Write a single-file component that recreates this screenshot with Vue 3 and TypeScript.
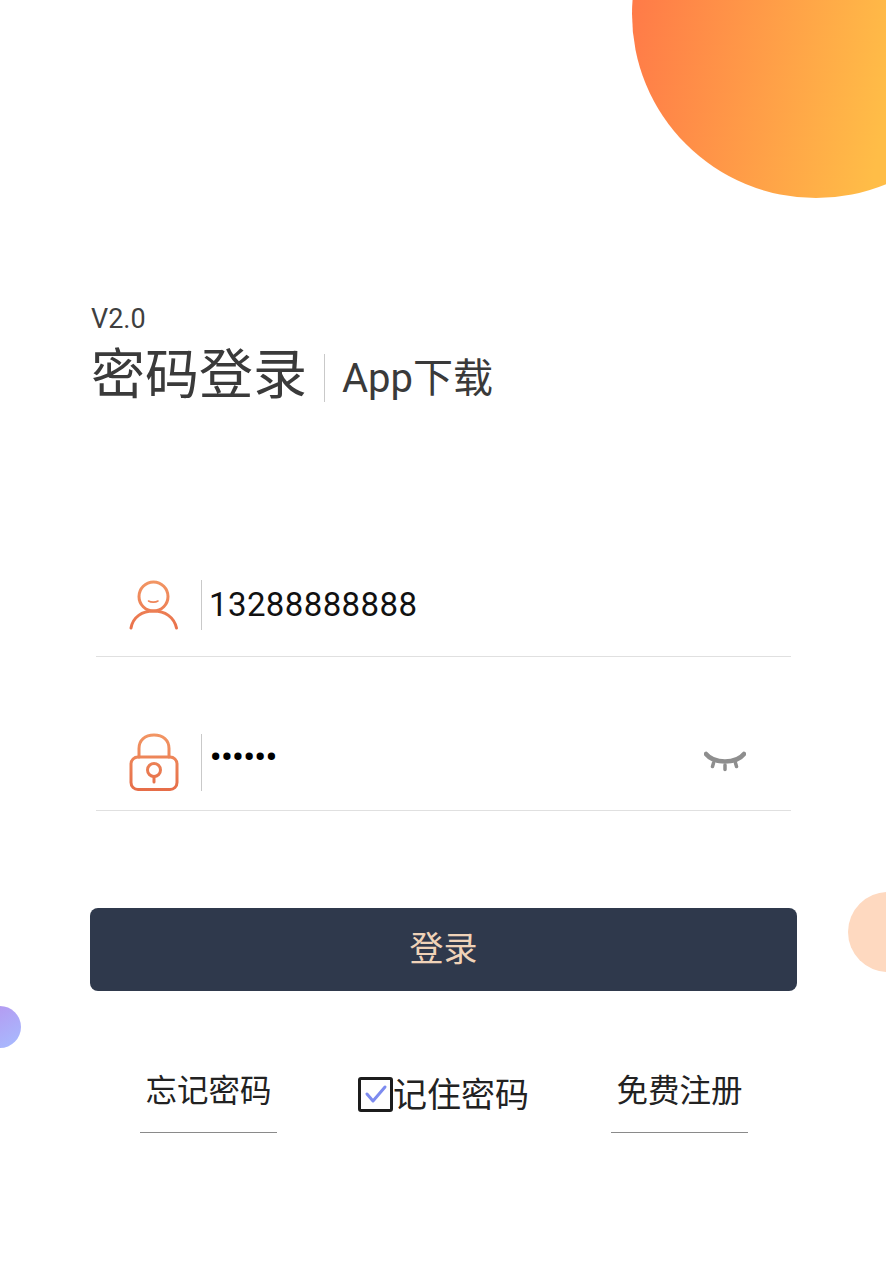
<script setup lang="ts">
const phone = '13288888888'
const dots = '••••••'
</script>

<template>
  <div class="page">
    <div class="blob blob-big"></div>
    <div class="blob blob-peach"></div>
    <div class="blob blob-purple"></div>

    <header class="head">
      <div class="version">V2.0</div>
      <div class="titles">
        <h1 class="title">密码登录</h1>
        <span class="title-sep"></span>
        <span class="download"><span class="app">App</span>下载</span>
      </div>
    </header>

    <section class="form">
      <div class="field field-user">
        <span class="icon">
          <svg width="50" height="50" viewBox="0 0 50 50" fill="none" stroke="url(#g1)" stroke-width="3" stroke-linecap="round">
            <defs>
              <linearGradient id="g1" gradientUnits="userSpaceOnUse" x1="0" y1="0" x2="0" y2="50">
                <stop offset="0" stop-color="#f29664" />
                <stop offset="1" stop-color="#e9704a" />
              </linearGradient>
            </defs>
            <circle cx="24.500" cy="16.500" r="14.500" />
            <path d="M2 48C4 37 13 31 24.500 31S45 37 47.500 48" />
            <path d="M19.500 21c2.500 1.500 7 1.500 9.500 0" stroke-width="1.600" />
          </svg>
        </span>
        <span class="sep"></span>
        <span class="value">{{ phone }}</span>
      </div>

      <div class="field field-pass">
        <span class="icon">
          <svg width="50" height="58" viewBox="0 0 50 58" fill="none" stroke="url(#g2)" stroke-width="3" stroke-linecap="round">
            <defs>
              <linearGradient id="g2" gradientUnits="userSpaceOnUse" x1="0" y1="0" x2="0" y2="58">
                <stop offset="0" stop-color="#f29664" />
                <stop offset="1" stop-color="#e66d48" />
              </linearGradient>
            </defs>
            <path d="M10 24V15.500C10 7 16 2 25 2S40 7 40 15.500V24" />
            <rect x="2" y="24" width="46" height="32.500" rx="7" />
            <circle cx="25" cy="37" r="6.500" />
            <path d="M25 43.500V49" />
          </svg>
        </span>
        <span class="sep"></span>
        <span class="value dots">{{ dots }}</span>
        <svg class="eye" width="42" height="22" viewBox="0 0 42 22" fill="none" stroke="#8e8e8e" stroke-width="4.500" stroke-linecap="round">
          <path d="M2 3C10 13 32 13 40 3" />
          <path d="M9.500 12l-1 3.500M21 14v4.500M31.500 12l1 3.500" stroke-width="3.500" />
        </svg>
      </div>
    </section>

    <button class="login" type="button">登录</button>

    <footer class="links">
      <a class="link">忘记密码</a>
      <label class="remember">
        <span class="box">
          <svg width="26" height="22" viewBox="0 0 26 22" fill="none" stroke="#7d8bef" stroke-width="3" stroke-linecap="round" stroke-linejoin="round">
            <path d="M4 11l6 7L22 4" />
          </svg>
        </span>
        <span>记住密码</span>
      </label>
      <a class="link">免费注册</a>
    </footer>
  </div>
</template>

<style>
html, body { margin: 0; background: #fff; }
</style>

<style scoped>
.page {
  position: relative;
  width: 886px;
  height: 1280px;
  overflow: hidden;
  background: #fff;
  box-sizing: border-box;
  padding: 303px 89px 0 90px;
  font-family: Roboto, "Noto Sans CJK SC", sans-serif;
  color: #333;
}
.blob { position: absolute; border-radius: 50%; }
.blob-big {
  width: 368px; height: 368px; left: 632px; top: -170px;
  background: linear-gradient(100deg, #ff7348 0%, #ffbd47 70%);
}
.blob-peach { width: 80px; height: 80px; left: 848px; top: 892px; background: #fed9c0; }
.blob-purple {
  width: 42px; height: 42px; left: -21px; top: 1006px;
  background: linear-gradient(150deg, #b795ef, #a6bcff);
}
.head { position: relative; }
.version { font-size: 27px; line-height: 32px; color: #3f3f3f; padding-left: 1px; }
.titles { display: flex; align-items: center; margin-top: 4px; height: 74px; padding-left: 1px; }
.title {
  margin: 0; font-size: 54px; line-height: 74px; font-weight: 400; color: #3a3a3a;
  letter-spacing: 0;
}
.title-sep { width: 1px; height: 48px; background: #c9c9c9; margin: 4px 17px 0 17px; }
.download { font-size: 40px; line-height: 50px; color: #3a3a3a; margin-top: 5px; }
.form { margin: 0 6px 0 6px; padding-top: 163px; }
.field {
  position: relative;
  display: flex;
  align-items: center;
  border-bottom: 1px solid #e0e0e0;
  box-sizing: border-box;
}
.field-user { height: 81px; padding-bottom: 23px; }
.field-pass { height: 154px; padding-top: 57px; }
.icon { width: 50px; margin-left: 33px; display: flex; justify-content: center; }
.sep { width: 1px; background: #c9c9c9; margin-left: 22px; }
.field-user .sep { height: 50px; }
.field-pass .sep { height: 57px; }
.value { margin-left: 7px; font-size: 33px; color: #111; letter-spacing: 0.4px; }
.dots { font-size: 31px; font-weight: 700; letter-spacing: 0; margin-left: 8px; margin-top: -10px; color: #000; }
.eye { margin-left: auto; margin-right: 45px; }
.login {
  display: block;
  width: 707px;
  height: 83px;
  margin-top: 97px;
  padding: 0 0 6px;
  border: 0;
  border-radius: 8px;
  background: #2f394c;
  color: #f0d3b8;
  font-family: inherit;
  font-size: 34px;
}
.links {
  position: relative;
  display: flex;
  margin-top: 79px;
  align-items: flex-start;
}
.link {
  width: 137px;
  height: 63px;
  box-sizing: border-box;
  border-bottom: 1px solid #8a8a8a;
  text-align: center;
  font-size: 31.5px;
  line-height: 44px;
  color: #222;
  margin-left: 50px;
}
.link:last-child { margin-left: 82px; }
.remember {
  display: flex;
  align-items: center;
  margin-left: 81px;
  font-size: 34px;
  line-height: 50px;
  color: #222;
}
.box {
  width: 35px; height: 35px; box-sizing: border-box;
  border: 3px solid #1c1c1c; border-radius: 3px;
  display: flex; align-items: center; justify-content: center;
  margin-top: -2px;
}
</style>
